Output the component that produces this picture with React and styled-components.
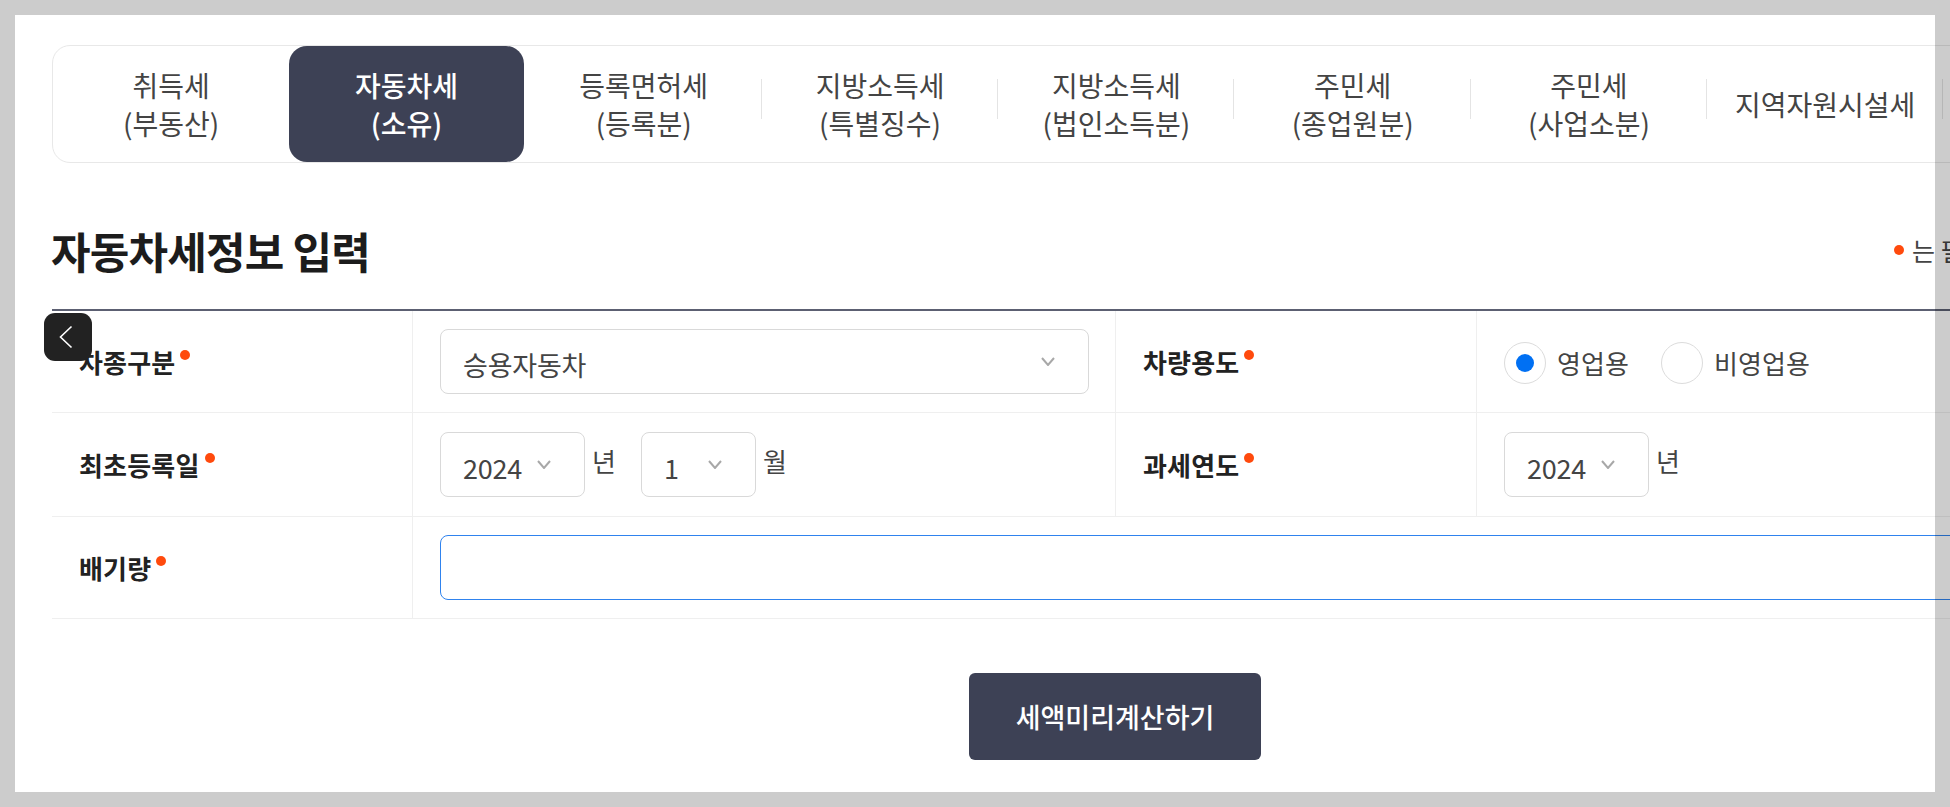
import React from 'react';
import styled, { createGlobalStyle } from 'styled-components';

const tabs = [
  ['취득세', '(부동산)'],
  ['자동차세', '(소유)'],
  ['등록면허세', '(등록분)'],
  ['지방소득세', '(특별징수)'],
  ['지방소득세', '(법인소득분)'],
  ['주민세', '(종업원분)'],
  ['주민세', '(사업소분)'],
  ['지역자원시설세'],
];

const Chevron = () => (
  <ChevronIcon viewBox="0 0 14 9" fill="none">
    <polyline points="1,1 7,8 13,1" stroke="#a8a8a8" strokeWidth="2" />
  </ChevronIcon>
);

const Pick = ({ value, width }) => (
  <SelectBox $width={width}>
    <span>{value}</span>
    <Chevron />
  </SelectBox>
);

const App = () => {
  return (
    <>
      <GlobalStyle />
      <Page>
        <TabBar>
          {tabs.map((lines, index) => (
            <Tab key={index} $active={index === 1} $line={index >= 2}>
              {lines.map(line => (
                <div key={line}>{line}</div>
              ))}
            </Tab>
          ))}
        </TabBar>

        <TitleRow>
          <Title>자동차세정보 입력</Title>
          <Note>
            <Dot />는 필수 입력 항목입니다.
          </Note>
        </TitleRow>

        <Table>
          <Row>
            <Label>차종구분<Dot /></Label>
            <Cell>
              <Pick value="승용자동차" width="649px" />
            </Cell>
            <Label>차량용도<Dot /></Label>
            <Cell>
              <Radios>
                <RadioItem>
                  <RadioCircle $checked />영업용
                </RadioItem>
                <RadioItem>
                  <RadioCircle />비영업용
                </RadioItem>
              </Radios>
            </Cell>
          </Row>
          <Row $tall>
            <Label>최초등록일<Dot /></Label>
            <Cell>
              <Pick value="2024" width="145px" />
              <Unit>년</Unit>
              <Pick value="1" width="115px" />
              <Unit>월</Unit>
            </Cell>
            <Label>과세연도<Dot /></Label>
            <Cell>
              <Pick value="2024" width="145px" />
              <Unit>년</Unit>
            </Cell>
          </Row>
          <Row $wide>
            <Label>배기량<Dot /></Label>
            <Cell>
              <TextInput type="text" />
            </Cell>
          </Row>
        </Table>

        <Actions>
          <Submit>세액미리계산하기</Submit>
        </Actions>

        <BackButton aria-label="back">
          <svg width="14" height="24" viewBox="0 0 14 24" fill="none">
            <polyline points="12.5,1.5 1.5,12 12.5,22.5" stroke="#fff" strokeWidth="1.6" />
          </svg>
        </BackButton>
      </Page>
      <Frame />
    </>
  );
};

const GlobalStyle = createGlobalStyle`
  html, body {
    margin: 0;
    padding: 0;
    height: 100%;
    overflow: hidden;
    background: #fff;
  }
  body {
    font-family: "Noto Sans CJK KR", "Noto Sans", sans-serif;
    color: #444;
  }
  * {
    box-sizing: border-box;
  }
`;

const Page = styled.div`
  position: relative;
  width: 1950px;
  height: 807px;
  overflow: hidden;
  padding: 45px 0 0 52px;
`;

const Frame = styled.div`
  position: fixed;
  inset: 0;
  border: 15px solid rgba(0, 0, 0, 0.2);
  pointer-events: none;
`;

const TabBar = styled.div`
  display: flex;
  width: 2126px;
  height: 118px;
  border: 1px solid #e8e8e8;
  border-radius: 18px;
`;

const Tab = styled.div`
  position: relative;
  flex: 0 0 ${props => (props.$active ? '234.3px' : '236.3px')};
  margin-right: ${props => (props.$active ? '2px' : '0')};
  display: flex;
  flex-direction: column;
  justify-content: center;
  align-items: center;
  font-size: 28px;
  line-height: 38px;
  border-radius: 18px;
  color: ${props => (props.$active ? '#fff' : '#444')};
  background: ${props => (props.$active ? '#3d4155' : 'transparent')};
  font-weight: ${props => (props.$active ? 500 : 400)};

  &::after {
    content: '';
    display: ${props => (props.$line ? 'block' : 'none')};
    position: absolute;
    right: 0;
    top: 33px;
    width: 1px;
    height: 40px;
    background: #e4e4e4;
  }
`;

const TitleRow = styled.div`
  display: flex;
  justify-content: space-between;
  align-items: center;
  width: 2126px;
  height: 146px;
  padding-top: 28px;
`;

const Title = styled.h2`
  margin: 0 0 0 -1px;
  font-size: 43px;
  line-height: 56px;
  font-weight: 700;
  letter-spacing: -0.8px;
  color: #1c1c1c;
`;

const Note = styled.div`
  display: flex;
  align-items: center;
  gap: 8px;
  font-size: 25px;
  color: #444;
  margin-left: auto;
  width: 284px;
`;

const Dot = styled.i`
  display: inline-block;
  flex: none;
  width: 10px;
  height: 10px;
  border-radius: 50%;
  background: #ff4a0d;
`;

const Table = styled.div`
  width: 2126px;
  border-top: 2px solid #5c6072;
`;

const Row = styled.div`
  display: grid;
  grid-template-columns: ${props => (props.$wide ? '360px 1fr' : '360px 704px 360px 1fr')};
  height: ${props => (props.$tall ? '104px' : '102px')};
  border-bottom: 1px solid #efefef;
`;

const Label = styled.div`
  display: flex;
  align-items: center;
  padding-left: 27px;
  font-size: 26px;
  font-weight: 700;
  letter-spacing: 0.2px;
  color: #222;

  ${Dot} {
    margin: -14px 0 0 5px;
  }
`;

const Cell = styled.div`
  display: flex;
  align-items: center;
  padding: 0 27px;
  border-left: 1px solid #efefef;
  border-right: 1px solid #efefef;
  font-size: 26px;
  letter-spacing: 0.1px;
  color: #444;
`;

const SelectBox = styled.div`
  display: flex;
  align-items: center;
  justify-content: space-between;
  flex: none;
  width: ${props => props.$width};
  height: 65px;
  padding: 0 33px 0 22px;
  border: 1px solid #d9d9d9;
  border-radius: 8px;
  font-size: 27px;
  letter-spacing: -0.2px;

  span {
    padding-top: 6px;
  }
`;

const ChevronIcon = styled.svg`
  width: 14px;
  height: 9px;
  flex: none;
`;

const Unit = styled.span`
  flex: none;
  margin: -8px 25px 0 7px;
  font-size: 26px;
`;

const Radios = styled.div`
  display: flex;
  gap: 32px;
  padding-top: 2px;
`;

const RadioItem = styled.label`
  display: flex;
  align-items: center;
  gap: 11px;
`;

const RadioCircle = styled.span`
  display: flex;
  align-items: center;
  justify-content: center;
  width: 42px;
  height: 42px;
  border: 1px solid #dcdcdc;
  border-radius: 50%;

  &::before {
    content: '';
    display: ${props => (props.$checked ? 'block' : 'none')};
    width: 18px;
    height: 18px;
    border-radius: 50%;
    background: #0070f3;
  }
`;

const TextInput = styled.input`
  width: 100%;
  height: 65px;
  border: 1.5px solid #2f83ee;
  border-radius: 8px;
  outline: none;
  background: #fff;
`;

const Actions = styled.div`
  display: flex;
  justify-content: center;
  width: 2126px;
  margin-top: 54px;
`;

const Submit = styled.button`
  width: 292px;
  height: 87px;
  border: none;
  border-radius: 6px;
  background: #3d4155;
  color: #fff;
  font-family: inherit;
  font-size: 27px;
  font-weight: 500;
`;

const BackButton = styled.button`
  position: absolute;
  left: 44px;
  top: 313px;
  display: flex;
  align-items: center;
  justify-content: center;
  width: 48px;
  height: 48px;
  padding: 0 4px 0 0;
  border: none;
  border-radius: 11px;
  background: #222;
`;

export default App;
